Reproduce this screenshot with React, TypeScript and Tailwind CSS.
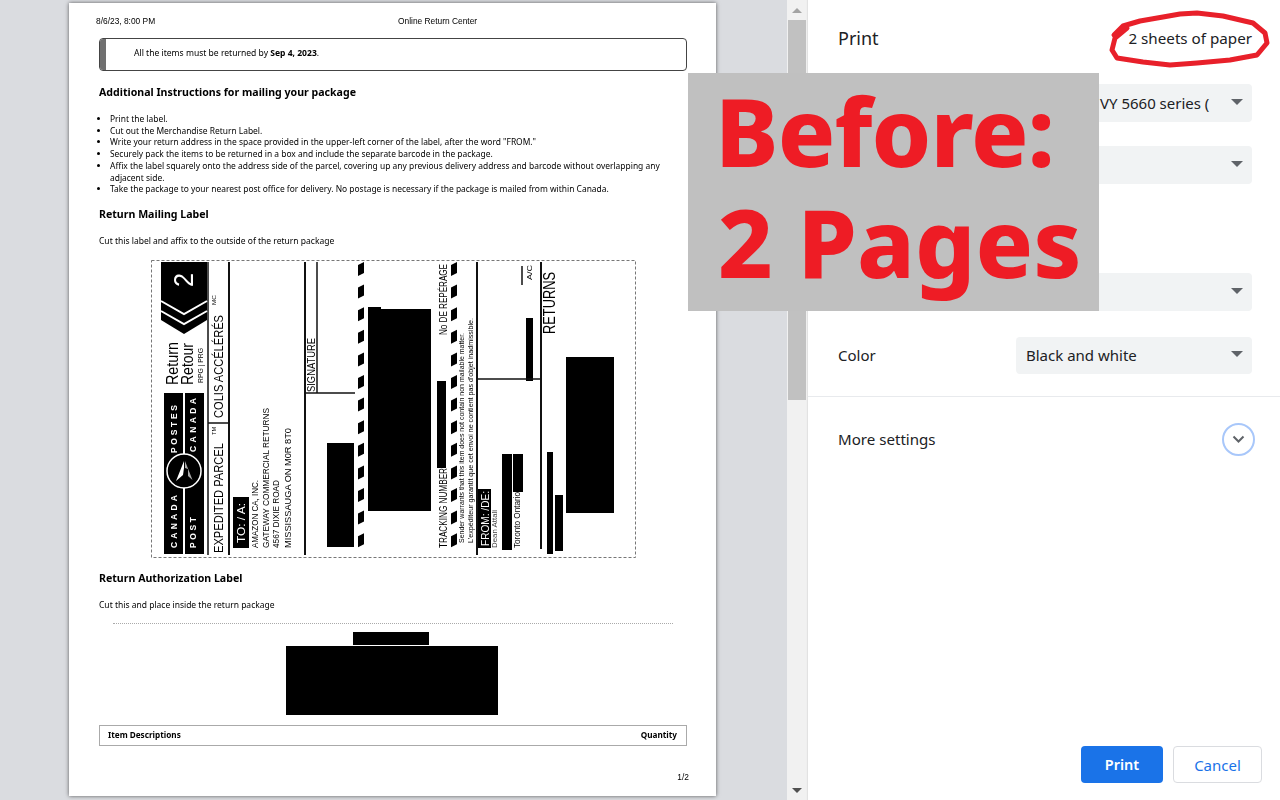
const doc = { fontFamily: '"Noto Sans", sans-serif' }
const helvetica = '"Liberation Sans", Arial, sans-serif'

const steps = [
  'Print the label.',
  'Cut out the Merchandise Return Label.',
  'Write your return address in the space provided in the upper-left corner of the label, after the word "FROM."',
  'Securely pack the items to be returned in a box and include the separate barcode in the package.',
  'Affix the label squarely onto the address side of the parcel, covering up any previous delivery address and barcode without overlapping any adjacent side.',
  'Take the package to your nearest post office for delivery. No postage is necessary if the package is mailed from within Canada.',
]

// rotated label text: x is the baseline, y is where the text starts (bottom end)
function V({
  x,
  y,
  size,
  len,
  fill = '#000',
  bold,
  spaced,
  children,
}: {
  x: number
  y: number
  size: number
  len: number
  fill?: string
  bold?: boolean
  spaced?: boolean
  children: string
}) {
  return (
    <text
      x={x}
      y={y}
      transform={`rotate(-90 ${x} ${y})`}
      fontSize={size}
      fontFamily={helvetica}
      fontWeight={bold ? 700 : 400}
      fill={fill}
      textLength={len}
      lengthAdjust={spaced ? 'spacing' : 'spacingAndGlyphs'}
    >
      {children}
    </text>
  )
}

function Stripes({ x }: { x: number }) {
  const ys: number[] = []
  for (let i = 0; i < 13; i++) ys.push(262 + i * 22.6)
  return (
    <>
      {ys.map((y) => (
        <polygon key={y} points={`${x},${y + 3} ${x + 6},${y} ${x + 6},${y + 11} ${x},${y + 14}`} fill="#000" />
      ))}
    </>
  )
}

// redacted shipping label, drawn in page coordinates so it can be checked against the screenshot
function ShippingLabel() {
  const rects = [
    [327, 443, 27, 104],
    [368, 307, 13, 204],
    [381, 309, 50, 202],
    [437, 381, 9, 87],
    [502, 454, 10, 96],
    [513, 454, 10, 38],
    [526, 318, 7, 63],
    [566, 357, 48, 156],
    [547, 452, 6, 102],
    [555, 495, 8, 56],
    [233, 497, 16, 51],
    [478, 489, 13, 59],
  ]
  const lines = [
    [208, 262, 208, 555, 1.5],
    [229, 262, 229, 555, 2],
    [208, 423, 229, 423, 1.5],
    [305, 262, 305, 555, 2],
    [317, 262, 317, 393, 1.5],
    [305, 393, 355, 393, 1.5],
    [477, 262, 477, 555, 2],
    [477, 379, 541, 379, 1.5],
    [541, 262, 541, 549, 2],
    [522, 266, 522, 285, 1.5],
  ]
  return (
    <svg className="ml-[82px] block h-[298px] w-[485px]" viewBox="151 260 485 298">
      <rect x="151.5" y="260.5" width="484" height="297" fill="none" stroke="#777" strokeDasharray="3 2" />
      {rects.map(([x, y, w, h]) => (
        <rect key={`${x}-${y}`} x={x} y={y} width={w} height={h} fill="#000" />
      ))}
      {lines.map(([x1, y1, x2, y2, w]) => (
        <line key={`${x1}-${y1}-${x2}`} x1={x1} y1={y1} x2={x2} y2={y2} stroke="#111" strokeWidth={w} />
      ))}
      <Stripes x={358} />
      <Stripes x={451} />

      <polygon points="161,262 207,262 207,320 184,334 161,320" fill="#000" />
      <path d="M161 301L184 314L207 301M161 311L184 324L207 311" stroke="#fff" strokeWidth="2" fill="none" />
      <V x={193} y={287} size={27} len={14} fill="#fff">2</V>
      <V x={178} y={385} size={16} len={43}>Return</V>
      <V x={193} y={385} size={16} len={42}>Retour</V>
      <V x={203} y={383} size={6.5} len={35}>RPG | PRG</V>

      <rect x="164" y="393" width="19" height="161" fill="#000" />
      <rect x="185" y="393" width="19" height="161" fill="#000" />
      <circle cx="184" cy="471" r="17" fill="#000" stroke="#fff" strokeWidth="1.5" />
      <path d="M184 461L176 481L183 475L184 468Z" fill="#fff" />
      <path d="M185 461L192.5 480L188 476V469L185 468Z" fill="#aaa" />
      <V x={177} y={453} size={8.5} len={48} fill="#fff" bold spaced>POSTES</V>
      <V x={196} y={452} size={8.5} len={54} fill="#fff" bold spaced>CANADA</V>
      <V x={177} y={548} size={8.5} len={53} fill="#fff" bold spaced>CANADA</V>
      <V x={196} y={548} size={8.5} len={31} fill="#fff" bold spaced>POST</V>

      <V x={223} y={418} size={13} len={103}>COLIS ACCÉLÉRÉS</V>
      <V x={216} y={305} size={6} len={10}>MC</V>
      <V x={223} y={553} size={13} len={110}>EXPEDITED PARCEL</V>
      <V x={216} y={435} size={6} len={8}>TM</V>
      <V x={245} y={543} size={11} len={40} fill="#fff">TO: / A:</V>
      <V x={258} y={548} size={9.5} len={68}>AMAZON CA, INC.</V>
      <V x={269} y={548} size={9.5} len={140}>GATEWAY COMMERCIAL RETURNS</V>
      <V x={279} y={548} size={9.5} len={68}>4567 DIXIE ROAD</V>
      <V x={291} y={548} size={9.5} len={120}>MISSISSAUGA ON M0R 8T0</V>
      <V x={315} y={392} size={11} len={54}>SIGNATURE</V>
      <V x={447} y={335} size={10} len={71}>No DE REPÉRAGE</V>
      <V x={447} y={548} size={10} len={80}>TRACKING NUMBER</V>
      <V x={464} y={543} size={7.5} len={210}>Sender warrants that this item does not contain non mailable matter.</V>
      <V x={473} y={543} size={7.5} len={225}>L'expéditeur garantit que cet envoi ne contient pas d'objet inadmissible.</V>
      <V x={489} y={546} size={11} len={55} fill="#fff">FROM: /DE:</V>
      <V x={497} y={548} size={8} len={38} fill="#444">Dean Attali</V>
      <V x={520} y={548} size={9.5} len={56}>Toronto Ontario</V>
      <V x={532} y={280} size={8} len={15}>A/C</V>
      <V x={555} y={334} size={16} len={62}>RETURNS</V>
    </svg>
  )
}

function Paper() {
  return (
    <div
      className="mt-[3px] h-[793px] w-[647px] bg-white pt-[12px] text-black shadow-[0_0_4px_rgba(0,0,0,0.6)]"
      style={doc}
    >
      <div className="blur-[0.25px]">
        <div className="relative h-[12px] pl-[27px] text-[8.4px] leading-[12px] [font-family:'Liberation_Sans',sans-serif]">
          8/6/23, 8:00 PM
          <span className="absolute left-[329px] top-0">Online Return Center</span>
        </div>
        <div className="ml-[30px] mt-[11px] flex h-[33px] w-[588px] overflow-hidden rounded-[4px] border border-[#444]">
          <div className="w-[6px] shrink-0 bg-[#707070]" />
          <p className="pl-[28px] pt-[8px] text-[8.55px] leading-[12px]">
            All the items must be returned by <b>Sep 4, 2023</b>.
          </p>
        </div>
        <h2 className="ml-[30px] mt-[14px] text-[10.6px] font-bold leading-[14px]">
          Additional Instructions for mailing your package
        </h2>
        <ul className="ml-[41px] mt-[14px] w-[572px] list-disc text-[8.43px] leading-[11.7px]">
          {steps.map((s) => (
            <li key={s}>{s}</li>
          ))}
        </ul>
        <h2 className="ml-[30px] mt-[12px] text-[10.6px] font-bold leading-[14px]">Return Mailing Label</h2>
        <p className="ml-[30px] mt-[14px] text-[8.5px] leading-[12px]">Cut this label and affix to the outside of the return package</p>
        <div className="mt-[13px]">
          <ShippingLabel />
        </div>
        <h2 className="ml-[30px] mt-[13px] text-[10.6px] font-bold leading-[14px]">Return Authorization Label</h2>
        <p className="ml-[30px] mt-[14px] text-[8.5px] leading-[12px]">Cut this and place inside the return package</p>
        <div className="ml-[44px] mt-[12px] w-[560px] border-t border-dotted border-[#aaa]" />
        <div className="ml-[284px] mt-[8px] h-[13px] w-[76px] bg-black" />
        <div className="ml-[217px] mt-[1px] h-[69px] w-[212px] bg-black" />
        <div className="ml-[30px] mt-[10px] flex h-[21px] w-[588px] items-center justify-between border border-[#aaa] pl-[8px] pr-[9px] text-[8.2px] font-bold">
          <span>Item Descriptions</span>
          <span>Quantity</span>
        </div>
        <div className="mt-[25px] pr-[27px] text-right text-[8.4px] leading-[12px] [font-family:'Liberation_Sans',sans-serif]">1/2</div>
      </div>
    </div>
  )
}

function Scrollbar() {
  return (
    <div className="flex w-[21px] shrink-0 flex-col bg-[#f1f1f1] pl-[1px] pr-[2px]">
      <div className="flex h-[20px] items-center justify-center">
        <svg width="10" height="5" viewBox="0 0 10 5"><path d="M5 0L10 5H0Z" fill="#a3a3a3" /></svg>
      </div>
      <div className="h-[380px] bg-[#c1c1c1]" />
      <div className="mt-auto flex h-[20px] items-center justify-center">
        <svg width="10" height="5" viewBox="0 0 10 5"><path d="M0 0H10L5 5Z" fill="#505050" /></svg>
      </div>
    </div>
  )
}

function Arrow() {
  return (
    <svg className="-mt-[3px] shrink-0" width="12" height="6" viewBox="0 0 12 6"><path d="M0 0H12L6 6Z" fill="#5f6368" /></svg>
  )
}

function Select({ value, className }: { value?: string; className?: string }) {
  return (
    <div className={`ml-[208px] flex h-[38px] w-[236px] items-center rounded-[4px] bg-[#f1f3f4] pr-[9px] text-[15px] ${className ?? ''}`}>
      <span className="min-w-0 flex-1 whitespace-nowrap">{value}</span>
      <Arrow />
    </div>
  )
}

function Sidebar() {
  return (
    <aside
      className="flex min-w-0 flex-1 flex-col bg-white text-[#202124] shadow-[-1px_0_1px_rgba(0,0,0,0.06)]"
      style={doc}
    >
      <header className="flex h-[76px] shrink-0 items-center justify-between pl-[30px] pr-[28px]">
        <h1 className="text-[18px]">Print</h1>
        <span className="text-[15.2px]">2 sheets of paper</span>
      </header>
      {/* the labels of the top rows sit under the overlay, only the select ends show */}
      <Select className="mt-[8px] pl-[84px]" value="VY 5660 series (" />
      <Select className="mt-[24px]" />
      <Select className="mt-[89px]" />
      <div className="mt-[26px] flex items-center pl-[30px]">
        <span className="w-[178px] text-[15px]">Color</span>
        <div className="flex h-[37px] w-[236px] items-center rounded-[4px] bg-[#f1f3f4] pl-[10px] pr-[9px] text-[15px]">
          <span className="flex-1">Black and white</span>
          <Arrow />
        </div>
      </div>
      <div className="mt-[22px] h-px bg-[#e8eaed]" />
      <div className="flex h-[86px] items-center justify-between pl-[30px] pr-[25px]">
        <span className="-mt-[1px] text-[15.1px]">More settings</span>
        <div className="-mt-[2px] flex h-[33px] w-[33px] items-center justify-center rounded-full border-2 border-[#a8c7fa]">
          <svg width="13" height="8" viewBox="0 0 13 8"><path d="M1.5 1.5L6.5 6.5L11.5 1.5" fill="none" stroke="#5f6368" strokeWidth="2" /></svg>
        </div>
      </div>
      <footer className="mt-auto flex justify-end gap-[10px] pb-[17px] pr-[18px]">
        <button className="h-[37px] w-[82px] rounded-[4px] bg-[#1a73e8] pt-[1px] text-[14.5px] font-semibold text-white">Print</button>
        <button className="h-[37px] w-[89px] rounded-[4px] border border-[#dadce0] bg-white pt-[1px] text-[15px] text-[#1a73e8]">Cancel</button>
      </footer>
    </aside>
  )
}

export default function App() {
  return (
    <div className="relative flex h-[800px] w-[1280px] overflow-hidden bg-[#dadce0]">
      <main className="w-[787px] shrink-0 pl-[69px]">
        <Paper />
      </main>
      <Scrollbar />
      <Sidebar />

      {/* promo overlay stuck on top of the dialog */}
      <div
        className="absolute left-[688px] top-[73px] flex h-[238px] w-[411px] flex-col bg-[#c0c0c0] pl-[27px] pt-[2px] font-extrabold text-[#ee1c25]"
        style={doc}
      >
        <div className="whitespace-nowrap text-[95px] leading-[111px] tracking-[-0.9px]">Before:</div>
        <div className="whitespace-nowrap pl-[3px] text-[95px] leading-[111px]">2 Pages</div>
      </div>
      <svg className="absolute left-[1105px] top-[8px]" width="170" height="64" viewBox="1105 8 170 64">
        <path
          d="M1114 35L1123 26L1140 21L1163 17L1180 14L1197 13L1223 16L1253 23L1265 33L1267 43L1257 55L1230 60L1197 63L1170 65L1143 62L1117 58L1112 50L1115 38L1127 28"
          fill="none"
          stroke="#e8202a"
          strokeWidth="5"
          strokeLinejoin="round"
          strokeLinecap="round"
        />
      </svg>
    </div>
  )
}
